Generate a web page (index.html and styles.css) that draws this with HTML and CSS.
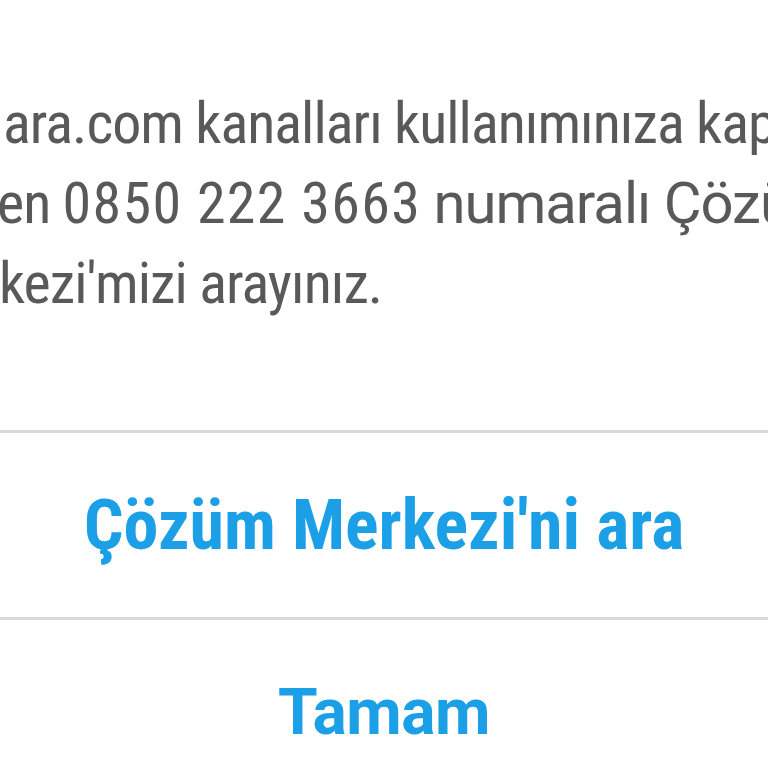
FILE: index.html
```html
<!DOCTYPE html>
<html lang="tr">
<head>
<meta charset="utf-8">
<link rel="stylesheet" href="styles.css">
</head>
<body>
<div class="dialog">
  <div class="message">
    <div class="line l1">ara.com kanalları kullanımınıza kapatılmıştır.</div>
    <div class="line l2">en <span class="phone">0850 222 3663</span> <span class="wide">numaralı Çözüm</span></div>
    <div class="line l3">kezi'mizi arayınız.</div>
  </div>
  <div class="actions">
    <div class="btn btn-call">Çözüm Merkezi'ni ara</div>
    <div class="btn btn-ok">Tamam</div>
  </div>
</div>
</body>
</html>
```
FILE: styles.css
```css
html, body {
  margin: 0;
  padding: 0;
  background: #ffffff;
  overflow: hidden;
}
.dialog {
  width: 768px;
  height: 768px;
  display: flex;
  flex-direction: column;
  overflow: hidden;
}
.message {
  flex-shrink: 0;
  height: 430px;
  box-sizing: border-box;
  padding-top: 83px;
  overflow: hidden;
  font-family: "Roboto", "Noto Sans", sans-serif;
  font-stretch: condensed;
  font-weight: 400;
  font-size: 58px;
  letter-spacing: -1px;
  line-height: 80px;
  color: #595959;
}
.line {
  white-space: nowrap;
}
.l1 { padding-left: 3px; }
.l2 { margin-left: -3px; }
.l3 { margin-left: -1px; }
.phone {
  letter-spacing: 1.3px;
}
.wide {
  font-stretch: 92%;
}
.actions {
  flex-shrink: 0;
  display: flex;
  flex-direction: column;
}
.btn {
  flex-shrink: 0;
  border-top: 3px solid #dadada;
  height: 184px;
  display: flex;
  align-items: center;
  justify-content: center;
  color: #1b9fe6;
  font-family: "Roboto", "Noto Sans", sans-serif;
  font-weight: 700;
  white-space: nowrap;
}
.btn-call {
  font-stretch: condensed;
  font-size: 70px;
}
.btn-ok {
  font-size: 64px;
  letter-spacing: -0.5px;
}
```
